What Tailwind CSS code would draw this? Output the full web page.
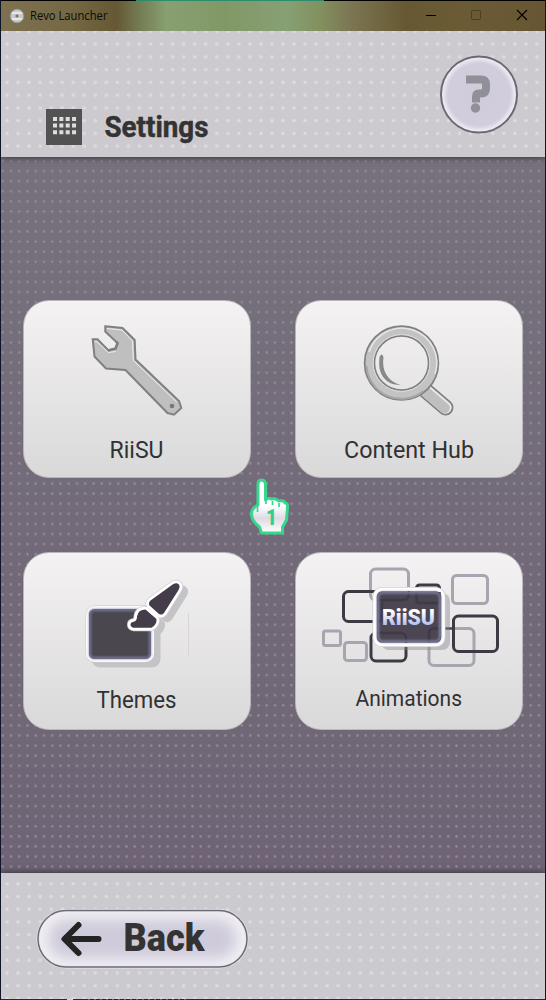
<!DOCTYPE html>
<html lang="en">
<head>
<meta charset="utf-8">
<title>Revo Launcher</title>
<script src="https://cdn.jsdelivr.net/npm/@tailwindcss/browser@4"></script>
</head>
<body class="w-[546px] h-[1000px] overflow-hidden bg-[#0b0d14]">
<div class="relative flex h-[1000px] w-[546px] flex-col overflow-hidden border-x border-[#11152a] bg-[#1d2535] font-['Roboto',sans-serif]">
  <!-- Title bar -->
  <div class="relative z-20 flex h-[31px] shrink-0 items-center border-t border-black bg-[linear-gradient(90deg,#7d7150_0,#756845_70px,#655833_115px,#747b52_138px,#889f70_165px,#819866_225px,#87a074_285px,#82905f_320px,#7c7553_350px,#665932_405px,#6b5b35_460px,#665633_544px)]">
    <svg class="ml-2 size-4" viewBox="0 0 16 16"><circle cx="8" cy="8" r="6.8" fill="#c7c9ca" stroke="#929799"/><path d="M3 5h10M3 11h10" stroke="#e6e8e9" stroke-width="2"/><circle cx="8" cy="8" r="2" fill="#aaa894"/><circle cx="8" cy="8" r="1" fill="#6d6540"/></svg>
    <svg class="ml-[5px] h-5 w-[90px]"><text x="0" y="14" font-family="Open Sans, sans-serif" font-size="12" textLength="77.5" lengthAdjust="spacingAndGlyphs" fill="#0b0b08">Revo Launcher</text></svg>
    <svg class="ml-auto h-[30px] w-[138px] shrink-0" viewBox="406 0 138 30" fill="none"><path d="M425 14.500h10" stroke="#000"/><rect x="470.500" y="9.500" width="9" height="9" rx="1" stroke="#4c4020"/><path d="m516 9 10 10m0-10-10 10" stroke="#000" stroke-width="1.100"/></svg>
  </div>
  <!-- Header -->
  <header class="relative z-10 flex h-[126px] shrink-0 bg-[#cccace] shadow-[0_1px_6px_#39333f]">
    <svg class="h-[126px] w-[544px]" viewBox="1 31 544 126">
      <defs>
        <pattern id="dots" width="11.04" height="12.75" patternUnits="userSpaceOnUse" x="1.5" y="37.7"><circle cx="5.520" cy="6.370" r="1.800" fill="#dddbdf"/></pattern>
        <radialGradient id="round"><stop offset="0" stop-color="#d0ccda"/><stop offset=".82" stop-color="#d1cddc"/><stop offset="1" stop-color="#f5f4f7"/></radialGradient>
      </defs>
      <rect x="1" y="31" width="544" height="126" fill="url(#dots)"/>
      <rect x="46" y="109" width="36" height="36" fill="#525252"/>
      <path d="M53 119h24m-24 6.600h24m-24 6.600h24" stroke="#dedede" stroke-width="4" stroke-dasharray="4 2.350"/>
      <text x="104.500" y="136.500" font-family="Roboto, sans-serif" font-weight="700" font-size="30" textLength="104" lengthAdjust="spacingAndGlyphs" fill="#333" stroke="#333" stroke-width=".5">Settings</text>
      <circle cx="479" cy="94.500" r="38" fill="url(#round)" stroke="#706776" stroke-width="2"/>
      <path d="M466 79.500h15q5 0 5 5v4q0 5-5 5h-2q-3 0-3 3v6" fill="none" stroke="#918f98" stroke-width="8"/><circle cx="475.500" cy="108" r="4.700" fill="#918f98"/>
    </svg>
  </header>
  <!-- Menu -->
  <main class="relative h-[716px] shrink-0 bg-linear-to-b from-[#77717d] to-[#6e6475]">
    <svg class="absolute inset-0 h-[716px] w-[544px]" viewBox="1 157 544 716"><defs><pattern id="small" width="8.25" height="10.08" patternUnits="userSpaceOnUse" x="-1.4" y="156"><circle cx="4.130" cy="5.050" r="1.350" fill="#8f8994"/></pattern></defs><rect x="1" y="157" width="544" height="716" fill="url(#small)"/></svg>
    <div class="relative grid grid-cols-[228px_228px] grid-rows-[178px_178px] gap-x-11 gap-y-[74px] pl-[22px] pt-[143px]">
      <section class="overflow-hidden rounded-[26px] border border-[#b9b6bb] bg-linear-to-b from-[#f4f2f3] to-[#dad9da]">
        <svg class="h-[176px] w-[226px]" viewBox="24 301 226 176">
          <path d="M105.300 326.300 122.500 328 134.700 340 135.500 359.500 179 401 181.300 408 174 414.700 167.500 413 125.500 370 106 368.500 94.500 356.500 92.700 339.300H97.500L108.500 350.500 115.500 349 117.500 343 105.300 331.500Z" fill="#bfbfbf" stroke="#808080" stroke-width="2"/>
          <path d="m107 328.500 15 1.500 10.500 11 .8 19.500 43.500 41.500M94.800 341.500h2l11.500 11 7.500-1" fill="none" stroke="#eee" stroke-width="1"/>
          <path d="M108 350.500l7.500-2 2-5-1-2" fill="none" stroke="#808080" stroke-width="2.600"/>
          <circle cx="172" cy="406" r="2.300" fill="#777"/>
          <text x="109.500" y="458.300" font-size="24.500" textLength="54" lengthAdjust="spacingAndGlyphs" font-family="Roboto, sans-serif" fill="#303132">RiiSU</text>
        </svg>
      </section>
      <section class="overflow-hidden rounded-[26px] border border-[#b9b6bb] bg-linear-to-b from-[#f4f2f3] to-[#dad9da]">
        <svg class="h-[176px] w-[226px]" viewBox="296 301 226 176" fill="none">
          <path d="m425 390 20.500 17.500" stroke="#808080" stroke-width="16" stroke-linecap="round"/><path d="m425 390 20.500 17.500" stroke="#e7e7e7" stroke-width="12.500" stroke-linecap="round"/><path d="m424 390.500 20.500 17.500" stroke="#bfbfbf" stroke-width="10.500" stroke-linecap="round"/>
          <circle cx="401.500" cy="363" r="32" stroke="#808080" stroke-width="11.500"/><circle cx="401.500" cy="363" r="32" stroke="#c3c3c3" stroke-width="8"/>
          <path d="M369 352a34.500 34.500 0 0 1 66 22" stroke="#e8e8e8" stroke-width="1.400"/><path d="M366.500 366a35 35 0 0 0 57 25" stroke="#a6a6a6" stroke-width="2"/><circle cx="401.500" cy="363" r="28.400" stroke="#dedede" stroke-width="1"/>
          <path d="M379.500 357q2-5 4 0c-2 14 4 24 17 28q-15 0-20-13-2-5-1-15Z" fill="#898989"/>
          <text x="344" y="458.300" font-size="24.500" textLength="130" lengthAdjust="spacingAndGlyphs" font-family="Roboto, sans-serif" fill="#303132">Content Hub</text>
        </svg>
      </section>
      <section class="overflow-hidden rounded-[26px] border border-[#b9b6bb] bg-linear-to-b from-[#f4f2f3] to-[#dad9da]">
        <svg class="h-[176px] w-[226px]" viewBox="24 553 226 176">
          <defs>
            <g id="brush"><path d="M173 584.300Q176.500 582 178.700 584.300 180.500 586.500 178.500 590L164 613Q162 615.500 159 614L149.500 605.500Q148 603 150.500 600.500Z"/><path d="M145.500 609.500 156.500 619Q157 624.500 151.500 627.700H133.500Q130.500 627 130.500 624.500 130.500 622 134.500 621.500 137 620.500 137 616.500 138 609.500 145.500 609.500Z"/></g>
            <linearGradient id="blue" x2="0" y2="1"><stop offset=".25" stop-color="#fff"/><stop offset=".85" stop-color="#a9b9f2"/></linearGradient>
            <filter id="soft"><feGaussianBlur stdDeviation="1.200"/></filter>
          </defs>
          <g transform="translate(6 5)" fill="#c4c3c5" stroke="#c4c3c5" stroke-width="5" stroke-linejoin="round"><rect x="88" y="608" width="64" height="52" rx="6"/><use href="#brush"/></g>
          <rect x="87.500" y="607.500" width="65" height="53" rx="7" fill="#4b474f" stroke="#c9c8cb" stroke-width="4"/>
          <rect x="87.500" y="607.500" width="65" height="53" rx="7" fill="#4b474f" stroke="#fafafa" stroke-width="3"/>
          <rect x="90" y="610" width="60" height="48" rx="4" fill="none" stroke="#8080aa" stroke-width="2" filter="url(#soft)"/>
          <g fill="#fff" stroke="#cfced0" stroke-width="7" stroke-linejoin="round"><use href="#brush"/></g>
          <g fill="#fff" stroke="#fff" stroke-width="5.500" stroke-linejoin="round"><use href="#brush"/></g>
          <use href="#brush" fill="#443d49"/>
          <path d="M188.500 613v43" stroke="#d3d1d4" stroke-width=".8"/>
          <text x="96.500" y="707.800" font-size="24.500" textLength="80" lengthAdjust="spacingAndGlyphs" font-family="Roboto, sans-serif" fill="#303132">Themes</text>
        </svg>
      </section>
      <section class="overflow-hidden rounded-[26px] border border-[#b9b6bb] bg-linear-to-b from-[#f4f2f3] to-[#dad9da]">
        <svg class="h-[176px] w-[226px]" viewBox="296 553 226 176" fill="none">
          <g stroke="#a9a5b0" stroke-width="3"><rect x="370.500" y="569" width="38" height="31" rx="5"/><rect x="452.500" y="575.500" width="35" height="28" rx="4"/><rect x="323.500" y="631" width="17" height="14.500" rx="2"/><rect x="344.500" y="642.500" width="22" height="18" rx="3"/><rect x="429" y="628.500" width="45" height="37" rx="5"/></g>
          <g stroke="#3e3a44" stroke-width="3"><rect x="343.500" y="591.500" width="38" height="30" rx="5"/><rect x="416.500" y="585" width="23" height="18" rx="3"/><rect x="371" y="633" width="35" height="28" rx="5"/><path d="M443 628.500h10" stroke-width="2"/><rect x="453.500" y="616" width="44" height="35.500" rx="5"/></g>
          <rect x="381" y="593" width="69" height="57" rx="8" fill="#88848b" opacity=".42"/>
          <rect x="375" y="589.500" width="68" height="55" rx="7" fill="#4b4652" stroke="#d0cfd4" stroke-width="5"/><rect x="375" y="589.500" width="68" height="55" rx="7" fill="#4b4652" stroke="#fff" stroke-width="3.500"/>
          <path d="M377 600h26q6 0 6-6v-3M377 622q5 0 5-4v-16M377 633h24q5 0 5 5v5M441 628.500h-7q-5 0-5 5v9M416.500 592v8q0 3 3 3h17q3 0 3-3v-8" stroke="#403a46" stroke-width="2.500"/>
          <rect x="378" y="592.500" width="62" height="49" rx="5" stroke="#8b8cb5" stroke-width="2" filter="url(#soft)"/>
          <text x="382" y="625" font-size="22" textLength="53" lengthAdjust="spacingAndGlyphs" font-family="Roboto, sans-serif" font-weight="900" fill="url(#blue)">RiiSU</text>
          <text x="355.500" y="705.800" font-size="22" textLength="106.500" lengthAdjust="spacingAndGlyphs" font-family="Roboto, sans-serif" fill="#303132">Animations</text>
        </svg>
      </section>
    </div>
    <!-- Hand pointer -->
    <svg class="absolute left-[247px] top-[320px] h-[60px] w-[44px]" viewBox="248 477 44 60">
      <defs><linearGradient id="hand" x2="0" y2="1"><stop offset=".5" stop-color="#fff"/><stop offset=".72" stop-color="#dedae4"/><stop offset="1" stop-color="#fff"/></linearGradient></defs>
      <path d="M258 484q0-4 3.500-4t4 4v16q3-3 6-1 5-1 7 2 6-1 6.500 2 3 0 2.500 4l-1 13-4 7v6h-21l-2-6q-8-6-8-13 0-6 6.500-9Z" fill="url(#hand)" stroke="#38d78f" stroke-width="3" stroke-linejoin="round"/>
      <path d="M257.500 503v9M266 499v5M272.500 501v4M279 503v4" stroke="#38d78f" stroke-width="1.700"/>
      <path d="M268.500 513l4-3v15" fill="none" stroke="none"/>
      <text x="266" y="524.500" font-family="Roboto, sans-serif" font-size="22" font-weight="900" textLength="11" lengthAdjust="spacingAndGlyphs" fill="#33cf88">1</text>
    </svg>
  </main>
  <!-- Footer -->
  <footer class="relative z-10 h-[126px] shrink-0 bg-[#cbcace] shadow-[0_-1px_6px_#39333f]">
    <svg class="h-[126px] w-[544px]" viewBox="1 873 544 126">
      <defs><pattern id="footdots" width="11.04" height="12.75" patternUnits="userSpaceOnUse" x="1.5" y="877.3"><circle cx="5.520" cy="6.370" r="1.800" fill="#dddbdf"/></pattern><filter id="glow" x="-20%" y="-40%" width="140%" height="180%"><feGaussianBlur stdDeviation="7"/></filter><clipPath id="pill"><rect x="38" y="911" width="209" height="56" rx="28"/></clipPath></defs>
      <rect x="1" y="873" width="544" height="126" fill="url(#footdots)"/>
      <rect x="38" y="910.500" width="209" height="56.500" rx="28" fill="#f2f1f5" stroke="#e7e6e9" stroke-width="3"/>
      <g clip-path="url(#pill)"><rect x="48" y="919" width="189" height="40" rx="20" fill="#cfcbda" filter="url(#glow)"/></g>
      <rect x="38" y="910.500" width="209" height="56.500" rx="28" fill="none" stroke="#716878" stroke-width="1.500"/>
      <path d="M98.500 939H66m12.500-14L64.500 939l14 14" fill="none" stroke="#242424" stroke-width="6" stroke-linecap="round" stroke-linejoin="round"/>
      <text x="123.500" y="951" font-family="Roboto, sans-serif" font-weight="900" font-size="39" textLength="81" lengthAdjust="spacingAndGlyphs" fill="#333">Back</text>
    </svg>
  </footer>
  <div class="absolute left-[135px] top-0 z-30 h-px w-[188px] bg-[#2d8b70]"></div>
  <div class="absolute left-[66px] top-[999px] z-30 h-px w-[6px] bg-[#d5d7da]"></div>
  <div class="absolute left-[87px] top-[999px] z-30 h-px w-[98px] bg-[repeating-linear-gradient(90deg,#3867bd_0_2px,#1d2535_2px_6px)]"></div>
  <div class="absolute right-[-1px] top-[42px] z-30 h-[7px] w-px bg-[#4bddb0]"></div>
</div>
</body>
</html>
